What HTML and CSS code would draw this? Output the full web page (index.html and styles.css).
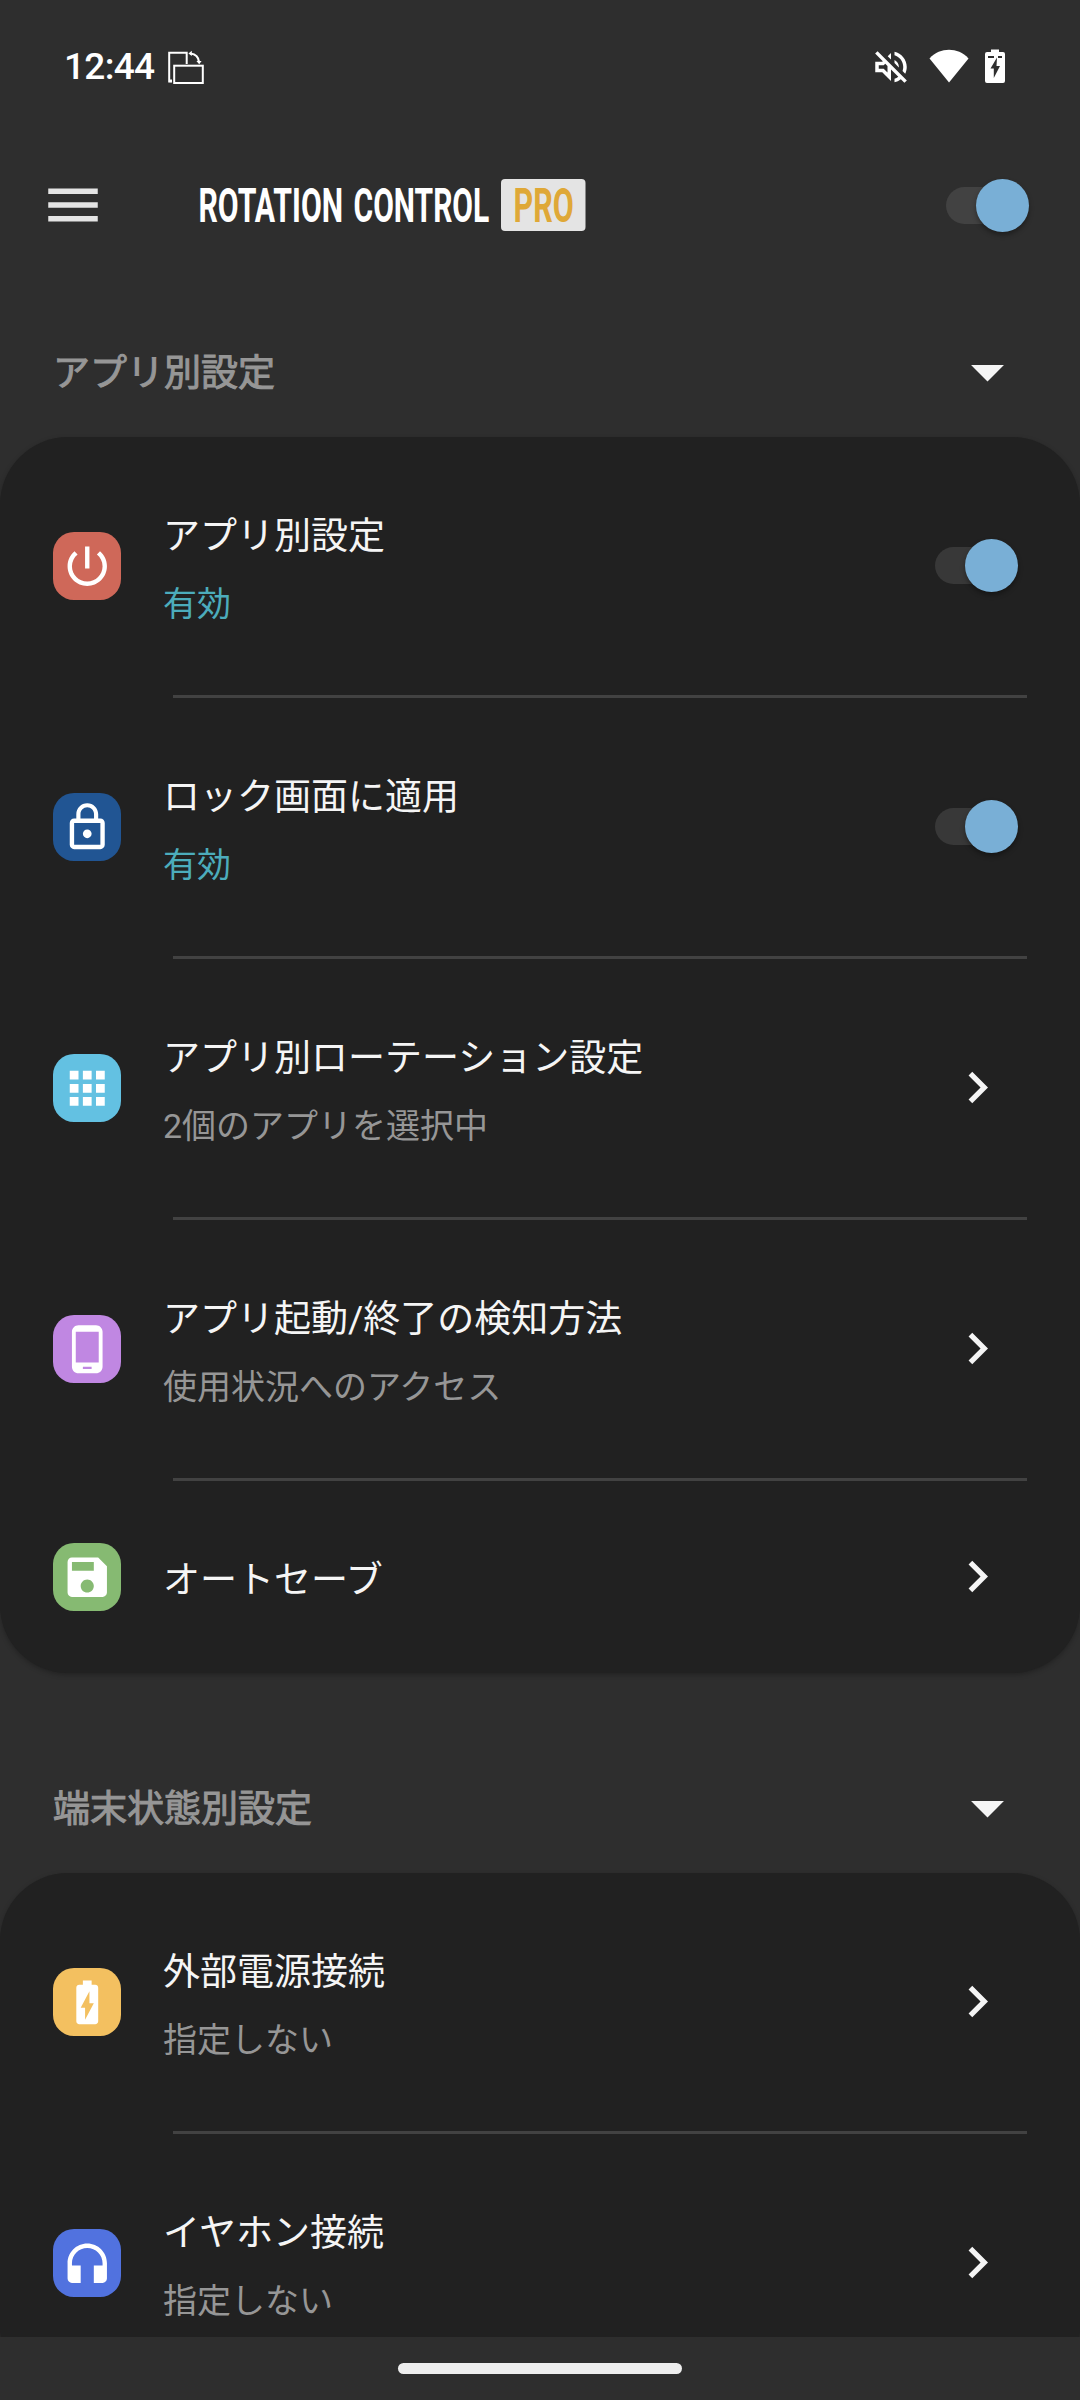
FILE: index.html
```
<!DOCTYPE html>
<html lang="ja">

<head>
  <meta charset="UTF-8">
  <meta name="viewport" content="width=device-width, initial-scale=1.0">
  <title>Rotation Control Pro</title>
  <link rel="stylesheet" href="styles.css">
</head>

<body>
  <div class="screen">
    <div class="status">
      <span class="time">12:44</span>
      <svg class="rotateIcon" viewBox="0 0 38 36" fill="none" stroke="#fff">
        <path d="M5 31.5H2.2V2.8H19.7V14" stroke-width="2" />
        <path d="M2 30.8H5" stroke-width="2.6" />
        <rect x="7.2" y="15.7" width="28.6" height="17.3" stroke-width="2" />
        <path d="M23.5 3.5C28.5 4.2 31.6 7.5 32 12" stroke-width="2.2" />
        <path d="M21.4 3.4l3.4-2.6v5.2zM32.2 14.2l-2.8-3.2h5.2z" fill="#fff" stroke="none" />
      </svg>
      <div class="statusRight">
        <svg class="mute" viewBox="0 0 24 24" fill="#fff">
          <path d="M4.34 2.93L2.93 4.34 7.29 8.7 7 9H3v6h4l5 5v-6.59l4.18 4.18c-.65.49-1.38.88-2.18 1.11v2.06c1.34-.3 2.57-.92 3.61-1.75l2.05 2.05 1.41-1.41L4.34 2.93zM10 15.17L7.83 13H5v-2h2.83l.88-.88L10 11.41v3.76zM19 12c0 .82-.15 1.61-.41 2.34l1.53 1.53c.56-1.17.88-2.48.88-3.87 0-4.28-2.99-7.86-7-8.77v2.06c2.89.86 5 3.54 5 6.71zm-7-8l-1.88 1.88L12 7.76zm4.5 8c0-1.77-1.02-3.29-2.5-4.03v1.79l2.48 2.48c.01-.08.02-.16.02-.24z" />
        </svg>
        <svg class="wifi" viewBox="0 0 40 34" fill="#fff">
          <path d="M20 33.5L.5 9.5C6 3.5 13 .8 20 .8s14 2.7 19.5 8.7z" />
        </svg>
        <svg class="battery" viewBox="0 0 20 34">
          <path d="M6 3V.5h8V3h4q2 0 2 2v27q0 2-2 2H2q-2 0-2-2V5q0-2 2-2z" fill="#fff" />
          <path d="M3 7h6v2H3zM13 7h4v2h-4zM12 8.5L5.5 19.5h3.3V29L15 17h-3.5z" fill="#2e2e2e" />
        </svg>
      </div>
    </div>

    <header class="appBar">
      <svg class="menu" viewBox="0 0 24 24" fill="#e4e4e4">
        <path d="M3 18h18v-2H3v2zm0-5h18v-2H3v2zm0-7v2h18V6H3z" />
      </svg>
      <svg class="logo" viewBox="0 0 400 60">
        <!-- 横向压缩文字 -->
        <text class="logoText" transform="translate(.5 47) scale(.615 1)" textLength="235" lengthAdjust="spacingAndGlyphs">ROTATION</text>
        <text class="logoText" transform="translate(155.5 47) scale(.62 1)" textLength="219" lengthAdjust="spacingAndGlyphs">CONTROL</text>
        <rect x="303" y="4" width="84.5" height="52" rx="4" fill="#e4e4e4" />
        <text class="logoText pro" transform="translate(315.5 47) scale(.64 1)" textLength="94" lengthAdjust="spacingAndGlyphs">PRO</text>
      </svg>
      <div class="switch"></div>
    </header>

    <main class="content">
      <section class="section">
        <div class="sectionHead">
          <h2>アプリ別設定</h2>
          <svg class="arrow" viewBox="0 0 24 24"><path d="M7 10l5 5 5-5z" /></svg>
        </div>
        <ul class="card">
          <li class="row">
            <div class="tile red">
              <svg viewBox="0 0 24 24"><path d="M13 3h-2v10h2V3zm4.83 2.17l-1.42 1.42C17.99 7.86 19 9.81 19 12c0 3.87-3.13 7-7 7s-7-3.13-7-7c0-2.19 1.01-4.14 2.58-5.42L6.17 5.17C4.23 6.82 3 9.26 3 12c0 4.97 4.03 9 9 9s9-4.03 9-9c0-2.74-1.23-5.18-3.17-6.83z" /></svg>
            </div>
            <div class="text">
              <p class="title">アプリ別設定</p>
              <p class="sub on">有効</p>
            </div>
            <div class="switch"></div>
          </li>
          <li class="row">
            <div class="tile navy">
              <svg viewBox="0 0 24 24"><path d="M12 17c1.1 0 2-.9 2-2s-.9-2-2-2-2 .9-2 2 .9 2 2 2zm6-9h-1V6c0-2.76-2.24-5-5-5S7 3.24 7 6v2H6c-1.1 0-2 .9-2 2v10c0 1.1.9 2 2 2h12c1.1 0 2-.9 2-2V10c0-1.1-.9-2-2-2zM8.9 6c0-1.71 1.39-3.1 3.1-3.1s3.1 1.39 3.1 3.1v2H8.9V6zM18 20H6V10h12v10z" /></svg>
            </div>
            <div class="text">
              <p class="title">ロック画面に適用</p>
              <p class="sub on">有効</p>
            </div>
            <div class="switch"></div>
          </li>
          <li class="row">
            <div class="tile sky">
              <svg viewBox="0 0 24 24"><path d="M4 8h4V4H4v4zm6 12h4v-4h-4v4zm-6 0h4v-4H4v4zm0-6h4v-4H4v4zm6 0h4v-4h-4v4zm6-10v4h4V4h-4zm-6 4h4V4h-4v4zm6 6h4v-4h-4v4zm0 6h4v-4h-4v4z" /></svg>
            </div>
            <div class="text">
              <p class="title">アプリ別ローテーション設定</p>
              <p class="sub">2個のアプリを選択中</p>
            </div>
            <svg class="chevron" viewBox="0 0 24 24"><path d="M10 6L8.59 7.41 13.17 12l-4.58 4.59L10 18l6-6z" /></svg>
          </li>
          <li class="row">
            <div class="tile purple">
              <svg viewBox="0 0 24 24"><path d="M16 1H8C6.34 1 5 2.34 5 4v16c0 1.66 1.34 3 3 3h8c1.66 0 3-1.34 3-3V4c0-1.66-1.34-3-3-3zm-2 20h-4v-1h4v1zm3.25-3H6.75V4h10.5v14z" /></svg>
            </div>
            <div class="text">
              <p class="title">アプリ起動/終了の検知方法</p>
              <p class="sub">使用状況へのアクセス</p>
            </div>
            <svg class="chevron" viewBox="0 0 24 24"><path d="M10 6L8.59 7.41 13.17 12l-4.58 4.59L10 18l6-6z" /></svg>
          </li>
          <li class="row single">
            <div class="tile green">
              <svg viewBox="0 0 24 24"><path d="M17 3H5c-1.11 0-2 .9-2 2v14c0 1.1.89 2 2 2h14c1.1 0 2-.9 2-2V7l-4-4zm-5 16c-1.66 0-3-1.34-3-3s1.34-3 3-3 3 1.34 3 3-1.34 3-3 3zm3-10H5V5h10v4z" /></svg>
            </div>
            <div class="text">
              <p class="title">オートセーブ</p>
            </div>
            <svg class="chevron" viewBox="0 0 24 24"><path d="M10 6L8.59 7.41 13.17 12l-4.58 4.59L10 18l6-6z" /></svg>
          </li>
        </ul>
      </section>

      <section class="section">
        <div class="sectionHead">
          <h2>端末状態別設定</h2>
          <svg class="arrow" viewBox="0 0 24 24"><path d="M7 10l5 5 5-5z" /></svg>
        </div>
        <ul class="card">
          <li class="row">
            <div class="tile yellow">
              <svg viewBox="0 0 24 24"><path d="M15.67 4H14V2h-4v2H8.33C7.6 4 7 4.6 7 5.33v15.33C7 21.4 7.6 22 8.33 22h7.33c.74 0 1.34-.6 1.34-1.33V5.33C17 4.6 16.4 4 15.67 4zM11 20v-5.5H9L13 7v5.5h2L11 20z" /></svg>
            </div>
            <div class="text">
              <p class="title">外部電源接続</p>
              <p class="sub">指定しない</p>
            </div>
            <svg class="chevron" viewBox="0 0 24 24"><path d="M10 6L8.59 7.41 13.17 12l-4.58 4.59L10 18l6-6z" /></svg>
          </li>
          <li class="row">
            <div class="tile indigo">
              <svg viewBox="0 0 24 24"><path d="M12 3c-4.97 0-9 4.03-9 9v7c0 1.1.9 2 2 2h4v-8H5v-1c0-3.87 3.13-7 7-7s7 3.13 7 7v1h-4v8h4c1.1 0 2-.9 2-2v-7c0-4.97-4.03-9-9-9z" /></svg>
            </div>
            <div class="text">
              <p class="title">イヤホン接続</p>
              <p class="sub">指定しない</p>
            </div>
            <svg class="chevron" viewBox="0 0 24 24"><path d="M10 6L8.59 7.41 13.17 12l-4.58 4.59L10 18l6-6z" /></svg>
          </li>
        </ul>
      </section>
    </main>

    <div class="navBar">
      <div class="pill"></div>
    </div>
  </div>
</body>

</html>
```
FILE: styles.css
```
* {
  box-sizing: border-box;
  margin: 0;
  padding: 0;
}

body {
  background-color: #2e2e2e;
  font-family: Roboto, "Noto Sans CJK JP", sans-serif;
  color: #f5f5f5;
}

svg {
  display: block;
  flex-shrink: 0;
}

.screen {
  width: 1080px;
  height: 2400px;
  display: flex;
  flex-direction: column;
  overflow: hidden;
}

/* 状态栏 */
.status {
  height: 133px;
  padding: 0 75px 0 64px;
  display: flex;
  align-items: center;
  flex-shrink: 0;
}

.time {
  width: 103px;
  color: #fff;
  font-size: 37px;
  font-weight: 500;
  line-height: 44px;
  letter-spacing: -0.7px;
}

.rotateIcon {
  width: 38px;
  height: 36px;
  margin-top: 2px;
}

.statusRight {
  margin-left: auto;
  display: flex;
  align-items: center;
}

.mute {
  width: 42px;
  height: 42px;
  margin-right: 17px;
}

.wifi {
  width: 40px;
  height: 34px;
  margin-right: 16px;
  margin-bottom: 2px;
}

.battery {
  width: 20px;
  height: 34px;
  margin-bottom: 1px;
}

.appBar {
  height: 145px;
  padding: 0 51px 1px 40px;
  display: flex;
  align-items: center;
  flex-shrink: 0;
}

.menu {
  width: 66px;
  height: 66px;
}

.logo {
  width: 400px;
  height: 60px;
  margin-left: 92px;
}

.logoText {
  font-size: 48px;
  font-weight: 700;
  fill: #fff;
}

.logoText.pro {
  fill: #dfa837;
}

/* 开关 */
.switch {
  width: 83px;
  height: 53px;
  margin-left: auto;
  display: flex;
  align-items: center;
}

.switch::before {
  content: "";
  width: 74px;
  height: 37px;
  margin-right: -44px;
  border-radius: 19px;
  background-color: #424242;
  flex-shrink: 0;
}

/* 圆形滑块 */
.switch::after {
  content: "";
  width: 53px;
  height: 53px;
  border-radius: 50%;
  background-color: #79afd6;
  box-shadow: 0 3px 5px rgba(0, 0, 0, 0.35);
  flex-shrink: 0;
  z-index: 1;
}

.row .switch {
  margin-right: 9px;
  margin-bottom: 1px;
}

.row .switch::before {
  background-color: #383838;
}

.content {
  flex: 1;
  min-height: 0;
  padding-top: 29px;
  overflow: hidden;
}

.section {
  margin-bottom: 70px;
}

.sectionHead {
  height: 130px;
  padding: 0 53px;
  display: flex;
  align-items: center;
  justify-content: space-between;
}

.sectionHead h2 {
  padding-top: 4px;
  font-size: 37px;
  font-weight: 400;
  line-height: 52px;
  color: #969696;
  /* 比常规稍粗 */
  -webkit-text-stroke: 1px #969696;
}

.arrow {
  width: 79px;
  height: 79px;
  margin-bottom: 1px;
  fill: #f5f5f5;
}

.card {
  list-style: none;
  background-color: #212121;
  border-radius: 68px;
  box-shadow: 0 2px 5px rgba(0, 0, 0, 0.25);
}

.row {
  height: 261px;
  padding: 0 53px 3px;
  display: flex;
  align-items: center;
  /* 分割线 */
  background: linear-gradient(#424242, #424242) no-repeat 173px 100% / 854px 3px;
}

.row.single {
  height: 192px;
  padding-bottom: 0;
  background: none;
}

.tile {
  width: 68px;
  height: 68px;
  margin-right: 42px;
  border-radius: 21px;
  display: flex;
  align-items: center;
  justify-content: center;
}

.tile svg {
  width: 52.5px;
  height: 52.5px;
  fill: #fff;
}

.red {
  background-color: #cf6859;
}

.navy {
  background-color: #215593;
}

.sky {
  background-color: #63c1e2;
}

.purple {
  background-color: #c087e2;
}

.green {
  background-color: #86ba72;
}

.yellow {
  background-color: #f3c060;
}

.indigo {
  background-color: #5172df;
}

.text {
  flex: 1;
  padding-top: 9px;
}

.title {
  font-size: 37px;
  line-height: 68px;
}

.sub {
  font-size: 34px;
  line-height: 67px;
  color: #969696;
}

.sub.on {
  color: #4cacbc;
}

.single .text {
  padding-top: 7px;
}

.chevron {
  width: 63px;
  height: 63px;
  margin-right: 18px;
  margin-bottom: 2px;
  fill: #f5f5f5;
}

.navBar {
  height: 63px;
  display: flex;
  align-items: center;
  justify-content: center;
  flex-shrink: 0;
}

.pill {
  width: 284px;
  height: 11px;
  border-radius: 6px;
  background-color: #eee;
}
```
